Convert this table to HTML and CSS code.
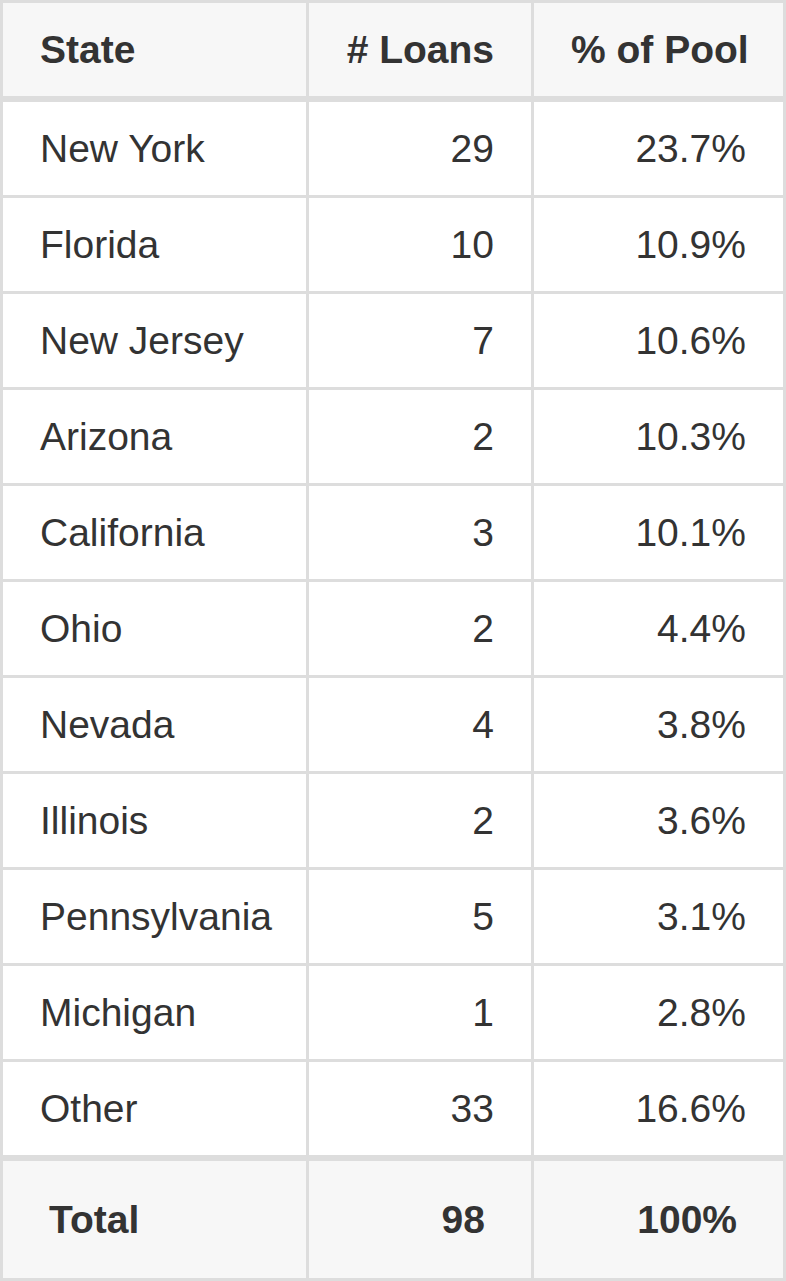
FILE: index.html
```html
<!DOCTYPE html>
<html lang="en">
<head>
<meta charset="utf-8">
<title>Loans by State</title>
<link rel="stylesheet" href="styles.css">
</head>
<body>
<table class="pool-table">
  <colgroup>
    <col class="col-state">
    <col class="col-loans">
    <col class="col-pct">
  </colgroup>
  <thead>
    <tr>
      <th class="cell-left">State</th>
      <th class="cell-num"># Loans</th>
      <th class="cell-num">% of Pool</th>
    </tr>
  </thead>
  <tbody>
    <tr><td class="cell-left">New York</td><td class="cell-num">29</td><td class="cell-num">23.7%</td></tr>
    <tr><td class="cell-left">Florida</td><td class="cell-num">10</td><td class="cell-num">10.9%</td></tr>
    <tr><td class="cell-left">New Jersey</td><td class="cell-num">7</td><td class="cell-num">10.6%</td></tr>
    <tr><td class="cell-left">Arizona</td><td class="cell-num">2</td><td class="cell-num">10.3%</td></tr>
    <tr><td class="cell-left">California</td><td class="cell-num">3</td><td class="cell-num">10.1%</td></tr>
    <tr><td class="cell-left">Ohio</td><td class="cell-num">2</td><td class="cell-num">4.4%</td></tr>
    <tr><td class="cell-left">Nevada</td><td class="cell-num">4</td><td class="cell-num">3.8%</td></tr>
    <tr><td class="cell-left">Illinois</td><td class="cell-num">2</td><td class="cell-num">3.6%</td></tr>
    <tr><td class="cell-left">Pennsylvania</td><td class="cell-num">5</td><td class="cell-num">3.1%</td></tr>
    <tr><td class="cell-left">Michigan</td><td class="cell-num">1</td><td class="cell-num">2.8%</td></tr>
    <tr><td class="cell-left">Other</td><td class="cell-num">33</td><td class="cell-num">16.6%</td></tr>
  </tbody>
  <tfoot>
    <tr class="total-row">
      <th class="cell-left">Total</th>
      <th class="cell-num">98</th>
      <th class="cell-num">100%</th>
    </tr>
  </tfoot>
</table>
</body>
</html>
```

FILE: styles.css
```css
html, body {
  margin: 0;
  padding: 0;
  background: #ffffff;
}

.pool-table {
  width: 786px;
  table-layout: fixed;
  border-collapse: separate;
  border-spacing: 0;
  border: 3px solid #dddddd;
  font-family: "Liberation Sans", Arial, Helvetica, sans-serif;
  font-size: 39px;
  line-height: 45px;
  color: #333333;
}

.col-state { width: 303px; }
.col-loans { width: 225px; }
.col-pct { width: 252px; }

.pool-table th,
.pool-table td {
  box-sizing: border-box;
  padding: 24px 37px;
  border-left: 3px solid #dddddd;
  border-top: 3px solid #dddddd;
  white-space: nowrap;
}

.pool-table th {
  font-weight: bold;
}

.pool-table tr > :first-child {
  border-left: none;
}

.pool-table thead th {
  border-top: none;
  background: #f7f7f7;
}

.pool-table tbody tr:first-child td {
  border-top-width: 6px;
}

.cell-left { text-align: left; }
.cell-num { text-align: right; }

.total-row th {
  background: #f7f7f7;
  border-top-width: 6px;
  padding: 36px 46px;
}
```
